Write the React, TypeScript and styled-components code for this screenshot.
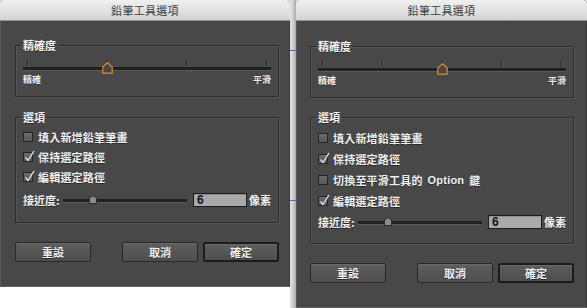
import React from 'react';
import styled, { createGlobalStyle } from 'styled-components';

const GlobalStyle = createGlobalStyle`
  html, body {
    margin: 0;
    padding: 0;
    background: #ffffff;
  }
  body {
    font-family: "Noto Sans CJK TC", "Liberation Sans", sans-serif;
  }
`;

const Screen = styled.div`
  display: flex;
  align-items: flex-start;
  width: 587px;
  height: 308px;
  overflow: hidden;
  background: #ffffff;
`;

const Divider = styled.div`
  flex: 0 0 6px;
  align-self: stretch;
  background:
    linear-gradient(#4a6fc4, #4a6fc4) 0 50px / 100% 1px no-repeat,
    linear-gradient(#4a6fc4, #4a6fc4) 0 200px / 100% 1px no-repeat,
    linear-gradient(to right, #e2e2e2, #cfcfcf 50%, #a9a9a9);
`;

const Dialog = styled.div<{ $w: number }>`
  flex: 0 0 ${p => p.$w}px;
  display: flex;
  flex-direction: column;
  background: #484848;
  border-radius: 4px 4px 0 0;
  box-shadow: inset 1px 0 0 #5a5a5a, inset -1px 0 0 #3a3a3a;
`;

const TitleBar = styled.div`
  height: 21px;
  display: flex;
  align-items: center;
  justify-content: center;
  background: linear-gradient(#f0f0f0, #d4d4d4);
  border-radius: 4px 4px 0 0;
  border-bottom: 1px solid #8e8e8e;
  box-sizing: border-box;
  color: #3c3c3c;
  font-size: 11px;
  letter-spacing: 0.3px;
`;

const Body = styled.div<{ $pl: number; $pr: number; $pt: number; $pb: number }>`
  display: flex;
  flex-direction: column;
  padding: ${p => `${p.$pt}px ${p.$pr}px ${p.$pb}px ${p.$pl}px`};
  border-bottom: 1px solid #5e5e5e;
`;

const Group = styled.fieldset<{ $mt?: number; $pt?: number; $pb: number }>`
  margin: ${p => p.$mt ?? 0}px 0 0;
  padding: ${p => p.$pt ?? 0}px 7px ${p => p.$pb}px;
  min-width: 0;
  border: 1px solid #2c2c2c;
  box-shadow: 1px 1px 0 #565656, inset 1px 1px 0 #555555;
`;

const Legend = styled.legend`
  margin-left: -2px;
  padding: 0 2px;
  font-size: 11px;
  line-height: 12px;
  font-weight: 700;
  color: #f2f2f2;
  text-shadow: 0 1px 0 rgba(0, 0, 0, 0.45);
`;

const SliderBox = styled.div`
  position: relative;
  height: 13px;
  margin-top: 9px;
`;

const Ticks = styled.div`
  display: flex;
  justify-content: space-between;
  padding: 0 4px;
`;

const Tick = styled.span`
  width: 1px;
  height: 5px;
  background: #1e1e1e;
  box-shadow: 1px 0 0 #5e5e5e;
`;

const Track = styled.div`
  margin-top: 2px;
  height: 3px;
  background: #202020;
  box-shadow: 0 1px 0 #5c5c5c;
`;

const Thumb = styled.svg<{ $pos: number }>`
  position: absolute;
  top: 2px;
  left: calc(4px + (100% - 8px) * ${p => p.$pos} - 5.5px);
`;

const Ends = styled.div`
  display: flex;
  justify-content: space-between;
  margin-top: 2px;
  font-size: 9px;
  line-height: 10px;
  font-weight: 700;
  color: #eeeeee;
  text-shadow: 0 1px 0 rgba(0, 0, 0, 0.45);
`;

const CheckRow = styled.label<{ $h: number }>`
  display: flex;
  align-items: center;
  gap: 5px;
  height: ${p => p.$h}px;
  font-size: 11px;
  font-weight: 700;
  color: #f0f0f0;
  text-shadow: 0 1px 0 rgba(0, 0, 0, 0.45);
  letter-spacing: 0.2px;
  white-space: nowrap;
`;

const Box = styled.span`
  position: relative;
  width: 10px;
  height: 10px;
  box-sizing: border-box;
  border: 1px solid #262626;
  background: linear-gradient(#6c6c6c, #575757);
`;

const Mark = styled.svg`
  position: absolute;
  left: 0;
  top: -3px;
`;

const Latin = styled.span`
  font-family: "Liberation Sans", "Noto Sans CJK TC", sans-serif;
  font-size: 11px;
`;

const ProxRow = styled.div<{ $mt: number }>`
  display: flex;
  align-items: center;
  height: 20px;
  margin-top: ${p => p.$mt}px;
  font-size: 11px;
  font-weight: 700;
  color: #f0f0f0;
  text-shadow: 0 1px 0 rgba(0, 0, 0, 0.45);
  white-space: nowrap;
`;

const ProxLabel = styled.span`
  flex: 0 0 40px;
`;

const SmallSlider = styled.div`
  position: relative;
  flex: 0 0 124px;
  height: 3px;
  background: #202020;
  box-shadow: 0 1px 0 #5c5c5c;
`;

const SmallThumb = styled.svg<{ $pos: number }>`
  position: absolute;
  top: -4px;
  left: calc(${p => p.$pos * 100}% - 4px);
`;

const NumField = styled.div`
  flex: 0 0 54px;
  height: 14px;
  margin-left: 6px;
  box-sizing: border-box;
  padding-left: 3px;
  border: 1px solid #1c1c1c;
  background: #a9a9a9;
  box-shadow: inset 0 1px 0 #8e8e8e;
  font-family: "Liberation Sans", sans-serif;
  font-size: 12px;
  line-height: 12px;
  font-weight: 700;
  color: #111111;
  text-shadow: none;
`;

const Unit = styled.span`
  flex: 0 0 auto;
  margin-left: 2px;
`;

const ButtonBar = styled.div<{ $mt: number }>`
  display: flex;
  gap: 5px;
  margin-top: ${p => p.$mt}px;
`;

const Button = styled.div<{ $primary?: boolean; $push?: boolean }>`
  width: 76px;
  height: 20px;
  box-sizing: border-box;
  display: flex;
  align-items: center;
  justify-content: center;
  margin-left: ${p => (p.$push ? 'auto' : '0')};
  border: ${p => (p.$primary ? '2px solid #1c1c1c' : '1px solid #282828')};
  border-radius: 2px;
  background: linear-gradient(#5e5e5e, #4e4e4e);
  box-shadow: inset 0 1px 0 #6a6a6a;
  font-size: 11px;
  font-weight: 700;
  color: #f0f0f0;
  text-shadow: 0 1px 0 rgba(0, 0, 0, 0.5);
`;

const Check = ({ checked, children, h }: { checked: boolean; children: React.ReactNode; h: number }) => (
  <CheckRow $h={h}>
    <Box>
      {checked && (
        <Mark width="11" height="12" viewBox="0 0 11 12">
          <path d="M1.5 7.5 L4 10.5 L10 1" fill="none" stroke="#ececec" strokeWidth="1.3" />
        </Mark>
      )}
    </Box>
    {children}
  </CheckRow>
);

const Precision = ({ ticks, pos }: { ticks: number; pos: number }) => (
  <>
    <SliderBox>
      <Ticks>
        {Array.from({ length: ticks }).map((_, i) => (
          <Tick key={i} />
        ))}
      </Ticks>
      <Track />
      <Thumb $pos={pos} width="11" height="12" viewBox="0 0 11 12">
        <path d="M5.5 0.8 L10.2 5 L10.2 11.2 L0.8 11.2 L0.8 5 Z" fill="#474747" stroke="#e08a2c" strokeWidth="1.2" />
      </Thumb>
    </SliderBox>
    <Ends>
      <span>精確</span>
      <span>平滑</span>
    </Ends>
  </>
);

const Proximity = ({ mt }: { mt: number }) => (
  <ProxRow $mt={mt}>
    <ProxLabel>接近度:</ProxLabel>
    <SmallSlider>
      <SmallThumb $pos={0.24} width="8" height="9" viewBox="0 0 8 9">
        <path d="M4 0.5 L7.5 3 L7.5 8.5 L0.5 8.5 L0.5 3 Z" fill="#8a8a8a" stroke="#2a2a2a" strokeWidth="1" />
      </SmallThumb>
    </SmallSlider>
    <NumField>6</NumField>
    <Unit>像素</Unit>
  </ProxRow>
);

const Buttons = ({ mt }: { mt: number }) => (
  <ButtonBar $mt={mt}>
    <Button>重設</Button>
    <Button $push>取消</Button>
    <Button $primary>確定</Button>
  </ButtonBar>
);

export default function App() {
  return (
    <Screen>
      <GlobalStyle />
      <Dialog $w={289}>
        <TitleBar>鉛筆工具選項</TitleBar>
        <Body $pl={15} $pr={11} $pt={18} $pb={24}>
          <Group $pb={11}>
            <Legend>精確度</Legend>
            <Precision ticks={4} pos={1 / 3} />
          </Group>
          <Group $mt={14} $pt={4} $pb={12}>
            <Legend>選項</Legend>
            <Check checked={false} h={20}>填入新增鉛筆筆畫</Check>
            <Check checked h={20}>保持選定路徑</Check>
            <Check checked h={20}>編輯選定路徑</Check>
            <Proximity mt={3} />
          </Group>
          <Buttons mt={19} />
        </Body>
      </Dialog>
      <Divider />
      <Dialog $w={290}>
        <TitleBar>鉛筆工具選項</TitleBar>
        <Body $pl={14} $pr={13} $pt={19} $pb={24}>
          <Group $pb={11}>
            <Legend>精確度</Legend>
            <Precision ticks={5} pos={0.5} />
          </Group>
          <Group $mt={13} $pt={4} $pb={11}>
            <Legend>選項</Legend>
            <Check checked={false} h={21}>填入新增鉛筆筆畫</Check>
            <Check checked h={21}>保持選定路徑</Check>
            <Check checked={false} h={21}>
              切換至平滑工具的 <Latin>Option</Latin> 鍵
            </Check>
            <Check checked h={21}>編輯選定路徑</Check>
            <Proximity mt={1} />
          </Group>
          <Buttons mt={19} />
        </Body>
      </Dialog>
    </Screen>
  );
}
